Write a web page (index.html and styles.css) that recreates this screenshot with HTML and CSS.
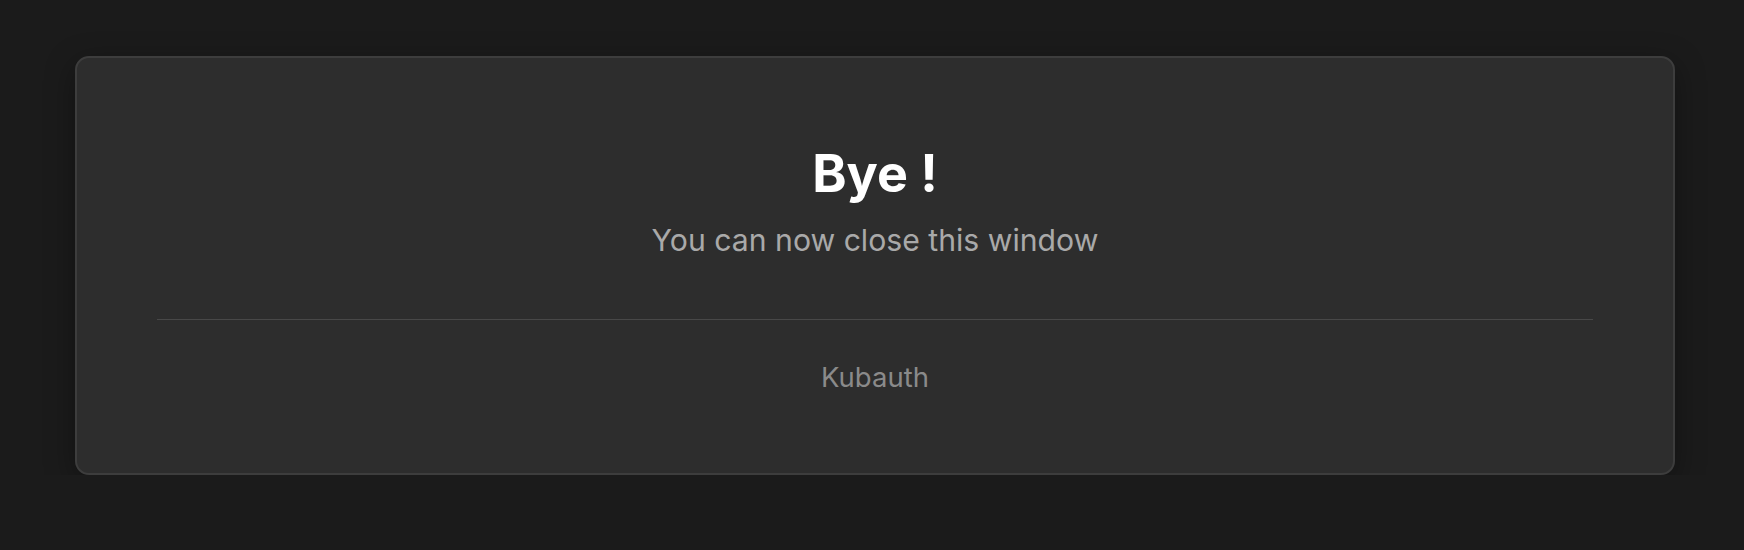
FILE: index.html
```html
<!DOCTYPE html>
<html lang="en">
<head>
<meta charset="utf-8">
<title>Kubauth</title>
<link rel="stylesheet" href="styles.css">
</head>
<body>
  <main class="page">
    <section class="card">
      <h1 class="title">Bye !</h1>
      <p class="subtitle">You can now close this window</p>
      <hr class="divider">
      <footer class="brand">Kubauth</footer>
    </section>
  </main>
</body>
</html>
```

FILE: styles.css
```css
* { box-sizing: border-box; }
html, body {
  margin: 0;
  padding: 0;
  background: #1b1b1b;
  font-family: Inter, "Noto Sans", "Liberation Sans", sans-serif;
}
.page {
  padding: 56px 69px 0 75px;
}
.card {
  width: 1600px;
  height: 419px;
  background: #2d2d2d;
  border: 2px solid #3d3d3d;
  border-radius: 14px;
  box-shadow: 0 8px 30px rgba(0, 0, 0, 0.35);
  padding: 84px 80px 0;
  display: flex;
  flex-direction: column;
  align-items: center;
}
.title {
  margin: 0;
  font-size: 52px;
  font-weight: 700;
  line-height: 63px;
  color: #ffffff;
}
.subtitle {
  margin: 16px 0 0;
  font-size: 30.2px;
  line-height: 38px;
  color: #a9a9a9;
}
.divider {
  align-self: stretch;
  margin: 60px 0 0;
  border: 0;
  height: 1px;
  background: #484848;
}
.brand {
  margin-top: 40px;
  font-size: 27.5px;
  line-height: 34px;
  color: #8a8a8a;
}
```
